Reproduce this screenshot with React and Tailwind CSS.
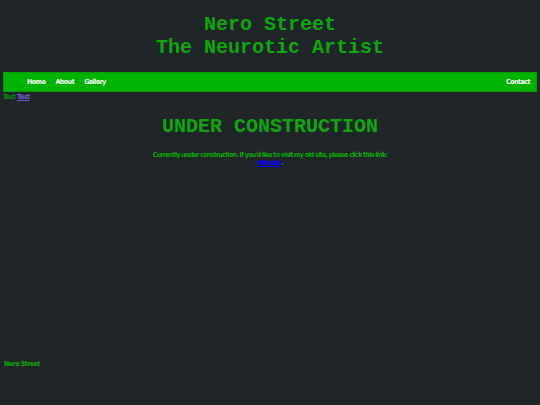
const impact = "font-['Impact','Liberation_Sans_Narrow','DejaVu_Sans_Condensed',sans-serif] tracking-[-0.5px]";
const mono = "font-['Liberation_Mono','Courier_New',monospace] font-bold";

export default function App() {
  return (
    <div className="flex h-[405px] flex-col bg-[#202528]">
      <header className={`${mono} pt-[13px] text-center text-[20px] leading-[23px] text-[#0ca80c]`}>
        <h1>Nero Street</h1>
        <h1>The Neurotic Artist</h1>
      </header>

      <nav
        className={`${impact} mx-[3px] mt-[13px] flex h-[20px] items-center border border-[#089c08] bg-[#00b300] pl-[23px] pr-[6px] text-[7px] font-bold text-white`}
      >
        <a href="#" className="mr-[10px]">Home</a>
        <a href="#" className="mr-[10px]">About</a>
        <a href="#">Gallery</a>
        <a href="#" className="ml-auto">Contact</a>
      </nav>

      <div className={`${impact} px-[3px] pt-[1px] text-[7px] font-bold leading-[9px]`}>
        <span className="text-[#0a8f0a]">Test</span>{" "}
        <a href="#" className="text-[#7060d0] underline">Test</a>
      </div>

      <main className="text-center">
        <h2 className={`${mono} mt-[13px] text-[20px] leading-[23px] text-[#0ca80c]`}>
          UNDER CONSTRUCTION
        </h2>
        <p className={`${impact} mt-[13px] text-[7px] font-bold leading-[8px] tracking-[-0.7px] text-[#0ca80c]`}>
          Currently under construction. If you'd like to visit my old site, please click this link:
          <br />
          <a href="#" className="text-[#0000ee] underline">Website</a>.
        </p>
      </main>

      <footer className={`${impact} mt-auto mb-[36px] px-[4px] text-[7px] font-bold leading-[9px] text-[#0ca80c]`}>
        Nero Street
      </footer>
    </div>
  );
}
